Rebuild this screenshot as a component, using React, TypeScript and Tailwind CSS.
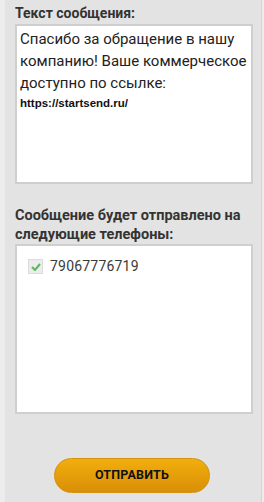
import React from "react";

const App = () => {
  return (
    <div className="w-[264px] h-[502px] bg-[#ececec] flex font-['Roboto',sans-serif]">
      <div className="ml-[5px] w-[257px] h-full bg-[#e3e3e3] border-r border-[#d4d4d4] flex flex-col pl-[10px] pr-[10px]">
        <div className="mt-[4px] text-[14px] leading-[18px] font-bold text-[#333]">
          Текст сообщения:
        </div>
        <div className="mt-[2px] h-[160px] w-[238px] bg-white border-2 border-[#cfcfcf] px-[3px] pt-[2px]">
          <p className="text-[15px] leading-[22px] text-[#222]">
            Спасибо за обращение в нашу компанию! Ваше коммерческое доступно по ссылке:
          </p>
          <p className="text-[11.5px] leading-[18px] font-bold text-[#111] font-['Liberation_Sans',sans-serif]">
            https://startsend.ru/
          </p>
        </div>
        <div className="mt-[22px] text-[14.5px] leading-[19px] font-bold text-[#333]">
          Сообщение будет отправлено на следующие телефоны:
        </div>
        <div className="h-[170px] w-[238px] bg-white border-2 border-[#cfcfcf] pt-[10px] pl-[11px]">
          <div className="flex items-center gap-[7px]">
            <div className="w-[15px] h-[15px] bg-[#ececec] border border-[#dcdcdc] flex items-center justify-center">
              <svg width="10" height="8" viewBox="0 0 10 8">
                <path d="M1 4 L4 7 L9 1" fill="none" stroke="#5cb85c" strokeWidth="2" />
              </svg>
            </div>
            <span className="text-[14px] text-[#3a3a3a] tracking-[0.2px]">79067776719</span>
          </div>
        </div>
        <div className="mt-[44px] flex justify-center pr-[2px]">
          <button className="w-[156px] h-[35px] rounded-full bg-gradient-to-b from-[#f2ae0c] to-[#d98f08] border border-[#d39411] text-[12.5px] font-bold text-[#111] tracking-[0.2px]">
            ОТПРАВИТЬ
          </button>
        </div>
      </div>
    </div>
  );
};

export default App;
